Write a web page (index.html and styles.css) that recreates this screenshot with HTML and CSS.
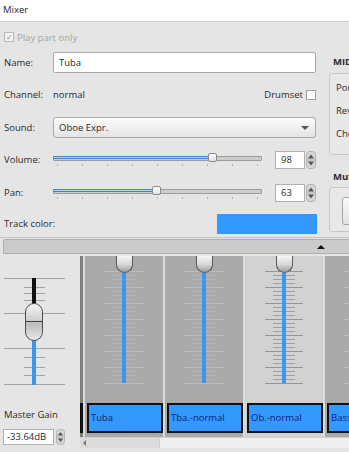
FILE: index.html
```html
<!DOCTYPE html>
<html lang="en">
  <head>
    <meta charset="UTF-8" />
    <title>Mixer</title>
    <link rel="stylesheet" href="styles.css">
  </head>
  <body>
    <div class="titlebar">Mixer</div>

    <div class="top">
      <div class="details">
        <div class="check-row disabled">
          <span class="checkbox checked">&#10003;</span>
          Play part only
        </div>
        <div class="row row-name">
          <span class="label">Name:</span>
          <div class="text-input">Tuba</div>
        </div>
        <div class="row row-channel">
          <span class="label">Channel:</span>
          <span class="value">normal</span>
          <span class="drumset">Drumset <span class="checkbox"></span></span>
        </div>
        <div class="row row-sound">
          <span class="label">Sound:</span>
          <div class="combo">Oboe Expr.</div>
        </div>
        <div class="row row-slider">
          <span class="label">Volume:</span>
          <div class="slider">
            <div class="slider-track">
              <div class="slider-fill" style="width: 76%"></div>
              <div class="slider-handle" style="left: 76%"></div>
            </div>
            <div class="slider-ticks">
              <span></span><span></span><span></span><span></span><span></span>
              <span></span><span></span><span></span><span></span>
            </div>
          </div>
          <div class="spinbox">
            <div class="spin-field">98</div>
            <svg class="spin-btn" width="10" height="18" viewBox="0 0 10 18">
              <rect x="0.5" y="0.5" width="9" height="17" rx="3" fill="#d6d6d6" stroke="#b2b2b2" />
              <line x1="1" y1="9" x2="9" y2="9" stroke="#b8b8b8" />
              <path d="M2 7.5 L5 3.5 L8 7.5 Z" fill="#555" />
              <path d="M2 10.5 L5 14.5 L8 10.5 Z" fill="#555" />
            </svg>
          </div>
        </div>
        <div class="row row-slider">
          <span class="label">Pan:</span>
          <div class="slider">
            <div class="slider-track">
              <div class="slider-fill" style="width: 49.5%"></div>
              <div class="slider-handle" style="left: 49.5%"></div>
            </div>
            <div class="slider-ticks">
              <span></span><span></span><span></span><span></span><span></span>
              <span></span><span></span><span></span><span></span>
            </div>
          </div>
          <div class="spinbox">
            <div class="spin-field">63</div>
            <svg class="spin-btn" width="10" height="18" viewBox="0 0 10 18">
              <rect x="0.5" y="0.5" width="9" height="17" rx="3" fill="#d6d6d6" stroke="#b2b2b2" />
              <line x1="1" y1="9" x2="9" y2="9" stroke="#b8b8b8" />
              <path d="M2 7.5 L5 3.5 L8 7.5 Z" fill="#555" />
              <path d="M2 10.5 L5 14.5 L8 10.5 Z" fill="#555" />
            </svg>
          </div>
        </div>
        <div class="row row-color">
          <span class="label">Track color:</span>
          <div class="color-swatch"></div>
        </div>
      </div>

      <div class="side">
        <div class="group-title">MIDI</div>
        <div class="group group-midi">
          <div>Port:</div>
          <div>Reverb:</div>
          <div>Chorus:</div>
        </div>
        <div class="group-title title-mute">Mute and Solo</div>
        <div class="group group-mute">
          <div class="btn">Mute</div>
        </div>
      </div>
    </div>

    <div class="collapse-bar"><span class="up-arrow"></span></div>

    <div class="mixer">
      <div class="master">
        <svg class="master-fader" width="80" height="140" viewBox="0 0 80 140">
          <defs>
            <linearGradient id="knob" x1="0" y1="0" x2="0" y2="1">
              <stop offset="0" stop-color="#f6f6f6" />
              <stop offset="0.45" stop-color="#cfcfcf" />
              <stop offset="0.55" stop-color="#bdbdbd" />
              <stop offset="1" stop-color="#e8e8e8" />
            </linearGradient>
          </defs>
          <g stroke="#a2a2a2" stroke-width="1">
            <line x1="4" y1="22.5" x2="65" y2="22.5" />
            <line x1="4" y1="57.5" x2="65" y2="57.5" />
            <line x1="4" y1="92.5" x2="65" y2="92.5" />
            <line x1="4" y1="128.5" x2="65" y2="128.5" />
            <line x1="24" y1="31.5" x2="45" y2="31.5" />
            <line x1="24" y1="37.5" x2="45" y2="37.5" />
            <line x1="24" y1="44.5" x2="45" y2="44.5" />
            <line x1="24" y1="101.5" x2="45" y2="101.5" />
            <line x1="24" y1="111.5" x2="45" y2="111.5" />
            <line x1="24" y1="119.5" x2="45" y2="119.5" />
          </g>
          <rect x="32" y="22" width="4" height="28" fill="#111" />
          <rect x="32" y="82" width="4" height="47" fill="#3a96ee" />
          <rect x="25.5" y="47.5" width="17" height="37" rx="8.5" fill="url(#knob)" stroke="#4e4e4e" />
          <line x1="26" y1="65.5" x2="42" y2="65.5" stroke="#3c3c3c" />
        </svg>
        <div class="master-label">Master Gain</div>
        <div class="spinbox master-spin">
          <div class="spin-field">-33.64dB</div>
          <svg class="spin-btn" width="9" height="16" viewBox="0 0 9 16">
            <rect x="0.5" y="0.5" width="8" height="15" rx="3" fill="#d6d6d6" stroke="#b2b2b2" />
            <line x1="1" y1="8" x2="8" y2="8" stroke="#b8b8b8" />
            <path d="M1.8 6.5 L4.5 3 L7.2 6.5 Z" fill="#555" />
            <path d="M1.8 9.5 L4.5 13 L7.2 9.5 Z" fill="#555" />
          </svg>
        </div>
      </div>

      <div class="strips-wrap">
        <div class="strips">
          <div class="strip-edge"></div>
          <div class="strip">
            <div class="fader"><div class="fader-knob"></div><div class="fader-level"></div></div>
            <div class="strip-label">Tuba</div>
          </div>
          <div class="strip">
            <div class="fader"><div class="fader-knob"></div><div class="fader-level"></div></div>
            <div class="strip-label">Tba.-normal</div>
          </div>
          <div class="strip selected">
            <div class="fader"><div class="fader-knob"></div><div class="fader-level"></div></div>
            <div class="strip-label">Ob.-normal</div>
          </div>
          <div class="strip">
            <div class="fader"><div class="fader-knob"></div><div class="fader-level"></div></div>
            <div class="strip-label">Bassoon-normal</div>
          </div>
        </div>
        <div class="hscroll">
          <span class="scroll-left"></span>
          <span class="scroll-handle"></span>
        </div>
      </div>
    </div>
  </body>
</html>
```

FILE: styles.css
```css
* {
  margin: 0;
  padding: 0;
  box-sizing: border-box;
}
body {
  width: 349px;
  height: 452px;
  overflow: hidden;
  background-color: #e5e5e5;
  font-family: "Open Sans", sans-serif;
  font-size: 9.5px;
  color: #2a2a2a;
}
.titlebar {
  height: 22px;
  line-height: 20px;
  padding-left: 3px;
  background-color: #fff;
  border-bottom: 1px solid #d2d2d2;
}
.top {
  display: flex;
  height: 216px;
  border-bottom: 1px solid #c4c4c4;
}
.details {
  width: 324px;
  flex-shrink: 0;
  padding: 0 8px 0 4px;
}
.check-row {
  display: flex;
  align-items: center;
  gap: 3px;
  height: 18px;
  margin-top: 6px;
}
.disabled {
  color: #a3a3a3;
}
.checkbox {
  display: inline-flex;
  align-items: center;
  justify-content: center;
  width: 10px;
  height: 10px;
  border: 1px solid #a0a0a0;
  background-color: #fff;
  font-size: 8px;
  line-height: 1;
  color: #555;
}
.disabled .checkbox {
  border-color: #b8b8b8;
  color: #8a8a8a;
  background-color: #f3f3f3;
}
.row {
  display: flex;
  align-items: center;
}
.row-name,
.row-sound {
  height: 32px;
}
.row-channel,
.row-slider {
  height: 33px;
}
.row-color {
  height: 28px;
}
.label {
  width: 49px;
  flex-shrink: 0;
  white-space: nowrap;
}
.text-input {
  flex: 1;
  height: 21px;
  line-height: 19px;
  padding-left: 5px;
  background-color: #fff;
  border: 1px solid #a8a8a8;
  border-radius: 2px;
}
.drumset {
  margin-left: auto;
  display: flex;
  align-items: center;
  gap: 3px;
}
.combo {
  flex: 1;
  position: relative;
  height: 21px;
  line-height: 19px;
  padding-left: 5px;
  border: 1px solid #a9a9a9;
  border-radius: 3px;
  background: linear-gradient(#fbfbfb, #e4e4e4);
}
.combo::after {
  content: "";
  position: absolute;
  right: 6px;
  top: 8px;
  border-left: 4px solid transparent;
  border-right: 4px solid transparent;
  border-top: 4px solid #555;
}
.slider {
  width: 210px;
  height: 14px;
  margin-right: 13px;
  margin-top: 1px;
}
.slider-track {
  position: relative;
  height: 9px;
}
.slider-track::before {
  content: "";
  position: absolute;
  left: 0;
  right: 0;
  top: 3px;
  height: 3px;
  background-color: #cdcdcd;
  border: 1px solid #9c9c9c;
  border-radius: 1px;
}
.slider-fill {
  position: absolute;
  left: 0;
  top: 3px;
  height: 3px;
  background-color: #b6d0f0;
  border: 1px solid #4a7ec6;
  border-radius: 1px;
}
.slider-handle {
  position: absolute;
  top: 0;
  width: 9px;
  height: 9px;
  margin-left: -4px;
  border: 1px solid #8c8c8c;
  border-radius: 2px;
  background: linear-gradient(#ffffff, #e0e0e0);
}
.slider-ticks {
  display: flex;
  justify-content: space-between;
  padding: 0 4px;
  margin-top: 2px;
}
.slider-ticks span {
  width: 1px;
  height: 2px;
  background-color: #b2b2b2;
}
.spinbox {
  display: flex;
  align-items: center;
}
.spin-field {
  width: 30px;
  height: 18px;
  line-height: 16px;
  padding-left: 5px;
  background-color: #fff;
  border: 1px solid #b0b0b0;
}
.spin-btn {
  margin-left: 1px;
}
.color-swatch {
  margin-left: auto;
  margin-right: -1px;
  margin-top: 1px;
  width: 100px;
  height: 20px;
  background-color: #3399ff;
}
.side {
  padding: 32px 0 0 5px;
  flex: 1;
}
.group-title {
  font-weight: 700;
  line-height: 16px;
  padding-left: 4px;
  white-space: nowrap;
}
.title-mute {
  margin-top: 14px;
}
.group {
  width: 100px;
  border: 1px solid #c8c8c8;
  border-radius: 3px;
  background-color: #e8e8e8;
}
.group-midi {
  margin-top: 3px;
  height: 82px;
  padding: 6px 0 0 6px;
  line-height: 16px;
}
.group-midi div {
  margin-bottom: 7px;
}
.group-mute {
  margin-top: 2px;
  height: 45px;
  padding: 9px 0 0 12px;
}
.btn {
  height: 28px;
  width: 60px;
  line-height: 26px;
  text-align: center;
  border: 1px solid #a5a5a5;
  border-radius: 3px;
  background: linear-gradient(#fafafa, #e2e2e2);
}
.collapse-bar {
  display: flex;
  justify-content: flex-end;
  align-items: center;
  height: 15px;
  margin: 1px 0 0 3px;
  padding-right: 24px;
  background-color: #cbcbcb;
  border: 1px solid #aeaeae;
  border-right: none;
  border-radius: 2px 0 0 2px;
}
.up-arrow {
  border-left: 4px solid transparent;
  border-right: 4px solid transparent;
  border-bottom: 4px solid #111;
}
.mixer {
  display: flex;
  height: 196px;
  margin-top: 2px;
}
.master {
  width: 80px;
  flex-shrink: 0;
  display: flex;
  flex-direction: column;
}
.master-fader {
  display: block;
}
.master-label {
  margin-top: 12px;
  padding-left: 4px;
  line-height: 14px;
}
.master-spin {
  margin: 7px 0 0 3px;
}
.master-spin .spin-field {
  width: 51px;
  height: 16px;
  line-height: 14px;
  padding-left: 3px;
}
.master-spin .spin-btn {
  margin-left: 2px;
}
.strips-wrap {
  flex: 1;
  overflow: hidden;
  display: flex;
  flex-direction: column;
}
.strips {
  display: flex;
  gap: 2px;
  height: 181px;
  background-color: #dcdcdc;
}
.strip-edge {
  width: 3px;
  flex-shrink: 0;
  background: linear-gradient(
    #7f7f7f 0 147px,
    #111 147px 177px,
    #7f7f7f 177px
  );
}
.strip {
  width: 78px;
  flex-shrink: 0;
  display: flex;
  flex-direction: column;
  background-color: #aaaaaa;
}
.strip.selected {
  background-color: #d2d2d2;
}
.fader {
  height: 140px;
  display: flex;
  flex-direction: column;
  align-items: center;
  background:
    repeating-linear-gradient(#bdbdbd 0 1px, transparent 1px 16px) center 15px / 38px 113px no-repeat,
    repeating-linear-gradient(#b6b6b6 0 1px, transparent 1px 4px) center 15px / 22px 113px no-repeat;
}
.selected .fader {
  background:
    repeating-linear-gradient(#959595 0 1px, transparent 1px 16px) center 15px / 38px 113px no-repeat,
    repeating-linear-gradient(#a0a0a0 0 1px, transparent 1px 4px) center 15px / 22px 113px no-repeat;
}
.fader-knob {
  width: 17px;
  height: 17px;
  border: 1px solid #5a5a5a;
  border-top: none;
  border-radius: 0 0 9px 9px;
  background: linear-gradient(#f5f5f5, #d6d6d6 55%, #9a9a9a);
}
.fader-level {
  width: 4px;
  height: 110px;
  background-color: #3a96ee;
}
.strip-label {
  margin: auto 0 4px 2px;
  height: 30px;
  line-height: 26px;
  padding-left: 2px;
  border: 2px solid #111;
  background-color: #3399ff;
  color: #142070;
  white-space: nowrap;
  overflow: hidden;
}
.hscroll {
  display: flex;
  height: 11px;
  background-color: #efefef;
  border-top: 1px solid #d0d0d0;
}
.scroll-left {
  width: 10px;
  background-color: #dcdcdc;
  position: relative;
}
.scroll-left::after {
  content: "";
  position: absolute;
  left: 3px;
  top: 2px;
  border-top: 3px solid transparent;
  border-bottom: 3px solid transparent;
  border-right: 3px solid #777;
}
.scroll-handle {
  width: 70px;
  background-color: #dcdcdc;
  border-right: 1px solid #cfcfcf;
}
```
